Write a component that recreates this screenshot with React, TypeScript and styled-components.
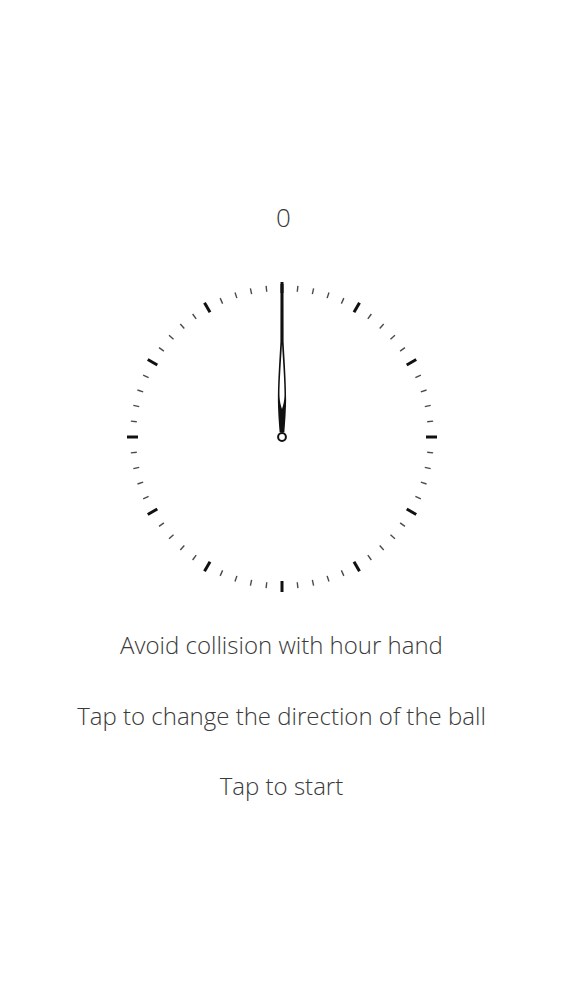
import React from "react";
import styled, { createGlobalStyle } from "styled-components";

const Global = createGlobalStyle`
  html, body { margin: 0; padding: 0; background: #ffffff; }
  body { font-family: "Open Sans", "Noto Sans", sans-serif; }
`;

const Page = styled.div`
  width: 563px;
  height: 1000px;
  display: flex;
  flex-direction: column;
  align-items: center;
  padding-top: 200px;
  box-sizing: border-box;
  background: #fff;
`;

const Score = styled.div`
  font-size: 26px;
  font-weight: 300;
  line-height: 34px;
  height: 34px;
  color: #3a3a3a;
  margin-left: 4px;
`;

const Dial = styled.svg`
  display: block;
  width: 320px;
  height: 320px;
  margin-top: 43px;
  margin-left: 1px;
`;

const Hint = styled.div<{ $gap: number }>`
  font-size: 24px;
  font-weight: 300;
  line-height: 30px;
  height: 30px;
  color: #3a3a3a;
  white-space: nowrap;
  margin-top: ${(p) => p.$gap}px;
`;

const ticks = Array.from({ length: 60 }, (_, i) => i);

function Clock() {
  return (
    <Dial viewBox="-160 -160 320 320">
      {ticks.map((i) => {
        const major = i % 5 === 0;
        const a = (i / 60) * Math.PI * 2;
        const r1 = major ? 144 : 146;
        const r2 = major ? 155 : 152;
        const s = Math.sin(a);
        const c = Math.cos(a);
        return (
          <line
            key={i}
            x1={s * r1}
            y1={-c * r1}
            x2={s * r2}
            y2={-c * r2}
            stroke={major ? "#111" : "#4a4a4a"}
            strokeWidth={major ? 3 : 1.4}
          />
        );
      })}
      <path
        d="M -1.5,-153 L 1.5,-153 L 1.6,-95 C 2.8,-74 4.3,-52 4.1,-36 C 3.9,-24 3,-13 2.4,-5 L -2.4,-5 C -3,-13 -3.9,-24 -4.1,-36 C -4.3,-52 -2.8,-74 -1.6,-95 Z"
        fill="#111"
      />
      <path
        d="M 0,-93 C 1.1,-74 2.6,-54 2.5,-42 C 2.3,-35 1,-31 0,-28 C -1,-31 -2.3,-35 -2.5,-42 C -2.6,-54 -1.1,-74 0,-93 Z"
        fill="#fff"
      />
      <circle cx="0" cy="0" r="3.9" fill="#fff" stroke="#111" strokeWidth="2" />
    </Dial>
  );
}

export default function App() {
  return (
    <>
      <Global />
      <Page>
        <Score>0</Score>
        <Clock />
        <Hint $gap={33}>Avoid collision with hour hand</Hint>
        <Hint $gap={41}>Tap to change the direction of the ball</Hint>
        <Hint $gap={40}>Tap to start</Hint>
      </Page>
    </>
  );
}
